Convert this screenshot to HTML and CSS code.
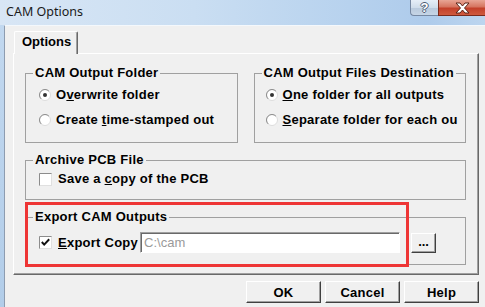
FILE: index.html
```html
<!DOCTYPE html>
<html>
<head>
<meta charset="utf-8">
<title>CAM Options</title>
<link rel="stylesheet" href="styles.css">
</head>
<body>
<div class="window">
  <div class="titlebar">
    <span class="title">CAM Options</span>
    <div class="caption">
      <div class="cb cb-help">?</div>
      <div class="cb cb-close">
        <svg width="15" height="12" viewBox="0 0 15 12"><polygon points="1,1 5,1 7.5,4 10,1 14,1 9.5,6 14,11 10,11 7.5,8 5,11 1,11 5.5,6" fill="#fff" stroke="#5b2418" stroke-width="1" stroke-linejoin="round"/></svg>
      </div>
    </div>
  </div>
  <div class="client">
    <div class="tabs"><div class="tab">Options</div></div>
    <div class="panel">
      <div class="row">
        <fieldset class="group">
          <legend>CAM Output Folder</legend>
          <div class="opts">
            <div class="opt"><svg class="radio" width="12" height="12" viewBox="0 0 12 12"><circle cx="6" cy="6" r="5.5" fill="#fff" stroke="#dcdcdc"/><path d="M2.11 9.89 A5.5 5.5 0 0 1 9.89 2.11" fill="none" stroke="#8c8c8c"/><circle cx="6" cy="6" r="2" fill="#333"/></svg><span>O<u>v</u>erwrite folder</span></div>
            <div class="opt"><svg class="radio" width="12" height="12" viewBox="0 0 12 12"><circle cx="6" cy="6" r="5.5" fill="#fff" stroke="#dcdcdc"/><path d="M2.11 9.89 A5.5 5.5 0 0 1 9.89 2.11" fill="none" stroke="#8c8c8c"/></svg><span>Create <u>t</u>ime-stamped out</span></div>
          </div>
        </fieldset>
        <fieldset class="group">
          <legend>CAM Output Files Destination</legend>
          <div class="opts opts-right">
            <div class="opt"><svg class="radio" width="12" height="12" viewBox="0 0 12 12"><circle cx="6" cy="6" r="5.5" fill="#fff" stroke="#dcdcdc"/><path d="M2.11 9.89 A5.5 5.5 0 0 1 9.89 2.11" fill="none" stroke="#8c8c8c"/><circle cx="6" cy="6" r="2" fill="#333"/></svg><span><u>O</u>ne folder for all outputs</span></div>
            <div class="opt"><svg class="radio" width="12" height="12" viewBox="0 0 12 12"><circle cx="6" cy="6" r="5.5" fill="#fff" stroke="#dcdcdc"/><path d="M2.11 9.89 A5.5 5.5 0 0 1 9.89 2.11" fill="none" stroke="#8c8c8c"/></svg><span><u>S</u>eparate folder for each ou</span></div>
          </div>
        </fieldset>
      </div>
      <fieldset class="group group-archive">
        <legend>Archive PCB File</legend>
        <div class="opts opts-archive">
          <div class="opt opt-check"><svg class="check" width="13" height="13" viewBox="0 0 13 13"><rect x="0.5" y="0.5" width="12" height="12" fill="#fff" stroke="#e0e0e0"/><path d="M0.5 12.5 V0.5 H12.5" fill="none" stroke="#8c8c8c"/></svg><span>Save a <u>c</u>opy of the PCB</span></div>
        </div>
      </fieldset>
      <fieldset class="group group-export">
        <legend>Export CAM Outputs</legend>
        <div class="opts opts-export">
          <div class="opt opt-check"><svg class="check" width="13" height="13" viewBox="0 0 13 13"><rect x="0.5" y="0.5" width="12" height="12" fill="#fff" stroke="#e0e0e0"/><path d="M0.5 12.5 V0.5 H12.5" fill="none" stroke="#8c8c8c"/><polyline points="2.8,6 5.2,8.6 10.2,3.2" fill="none" stroke="#111" stroke-width="2"/></svg><span><u>E</u>xport Copy</span></div>
          <div class="field">C:\cam</div>
          <div class="btn btn-browse">...</div>
        </div>
      </fieldset>
    </div>
    <div class="buttons">
      <div class="btn btn-main">OK</div>
      <div class="btn btn-main">Cancel</div>
      <div class="btn btn-main">Help</div>
    </div>
  </div>
  <div class="annotation"></div>
</div>
</body>
</html>
```
FILE: styles.css
```css
* { box-sizing: border-box; }
html, body { margin: 0; padding: 0; overflow: hidden; }
body {
  background: #f0f0f0;
  font-family: "Liberation Sans", Arial, sans-serif;
  font-size: 13px;
  font-weight: bold;
  letter-spacing: 0.25px;
  color: #000;
}
.window {
  width: 485px;
  height: 307px;
  display: flex;
  flex-direction: column;
  position: relative;
  background: linear-gradient(180deg, #c3d9f0, #b2cde9);
}
.titlebar {
  height: 25px;
  flex: none;
  display: flex;
  justify-content: space-between;
  align-items: flex-start;
  background: linear-gradient(90deg, #d8e6f5 0%, #cadef2 40%, #b7d2ee 72%, #aecbeb 88%, #bcd5ef 100%);
}
.title {
  font-family: "Noto Sans", "Open Sans", sans-serif;
  font-weight: normal;
  font-size: 12.5px;
  letter-spacing: 0;
  color: #1a1a1a;
  margin: 3px 0 0 6px;
}
.caption { display: flex; }
.cb {
  height: 16px;
  display: flex;
  align-items: center;
  justify-content: center;
}
.cb-help {
  width: 28px;
  border: 1px solid #7688a2;
  border-top: none;
  border-right: none;
  border-bottom-left-radius: 4px;
  background: linear-gradient(180deg, #e6eef7 0%, #d0ddeb 50%, #b8c9dc 51%, #c6d5e6 100%);
  color: #fff;
  font-size: 13px;
  font-weight: bold;
  line-height: 14px;
  text-shadow: 1px 0 #4c5d75, -1px 0 #4c5d75, 0 1px #4c5d75, 0 -1px #4c5d75;
}
.cb-close {
  width: 47px;
  border: 1px solid #7a2a1c;
  border-top: none;
  border-right: none;
  background: linear-gradient(180deg, #e8a595 0%, #d67560 45%, #c3402a 55%, #cf5a3e 100%);
}
.client {
  flex: 1;
  margin-left: 4px;
  border-left: 1px solid #8d9cb0;
  border-top: 1px solid #f4f8fc;
  background: #f0f0f0;
  padding: 5px 6px 0 8px;
}
.tabs { display: flex; }
.tab {
  position: relative;
  z-index: 1;
  width: 64px;
  height: 23px;
  margin-left: 1px;
  margin-bottom: -1px;
  padding-left: 7px;
  line-height: 20px;
  letter-spacing: 0;
  background: #f0f0f0;
  border-top: 1px solid #fff;
  border-left: 1px solid #fff;
  border-right: 1px solid #696969;
  border-top-left-radius: 2px;
  border-top-right-radius: 2px;
  box-shadow: inset -1px 0 #a0a0a0;
}
.panel {
  height: 222px;
  background: #f0f0f0;
  border-top: 1px solid #fff;
  border-left: 1px solid #fff;
  border-right: 1px solid #696969;
  border-bottom: 1px solid #696969;
  box-shadow: inset -1px -1px #a0a0a0;
  padding: 11px 12px 0 11px;
}
.row {
  display: grid;
  grid-template-columns: 1fr 1fr;
  column-gap: 16px;
}
.group {
  margin: 0;
  padding: 0;
  min-width: 0;
  border: 1px solid #a0a0a0;
}
.group legend {
  margin-left: 7px;
  padding: 0 2px;
  line-height: 16px;
}
.opts {
  display: flex;
  flex-direction: column;
  gap: 9px;
  padding: 6px 0 14px 13px;
}
.opts-right { padding-left: 11px; }
.opt {
  display: flex;
  align-items: center;
  gap: 5px;
  line-height: 16px;
  white-space: nowrap;
}
.opt-check { gap: 6px; }
.radio, .check { flex: none; }
.group-archive { margin-top: 9px; }
.opts-archive { padding: 3px 0 12px 13px; }
.group-export { margin-top: 9px; }
.opts-export {
  flex-direction: row;
  align-items: center;
  gap: 0;
  padding: 7px 0 11px 13px;
}
.field {
  width: 260px;
  height: 21px;
  margin-left: 2px;
  background: #fff;
  border: 1px solid;
  border-color: #a0a0a0 #fff #fff #a0a0a0;
  box-shadow: inset 1px 1px #696969;
  padding-left: 3px;
  font-weight: normal;
  letter-spacing: 0;
  color: #9a9a9a;
  line-height: 19px;
}
.btn {
  display: flex;
  align-items: center;
  justify-content: center;
  background: #f0f0f0;
  border: 1px solid;
  border-color: #fff #404040 #404040 #fff;
  box-shadow: inset -1px -1px #a0a0a0;
}
.btn-browse {
  width: 25px;
  height: 20px;
  margin-left: 11px;
  padding-bottom: 2px;
  letter-spacing: 0;
}
.buttons {
  display: flex;
  justify-content: flex-end;
  gap: 4px;
  margin-top: 6px;
}
.btn-main {
  width: 75px;
  height: 22px;
}
.annotation {
  position: absolute;
  left: 25px;
  top: 202px;
  width: 384px;
  height: 65px;
  border: 3px solid #ee3535;
  pointer-events: none;
}
```
